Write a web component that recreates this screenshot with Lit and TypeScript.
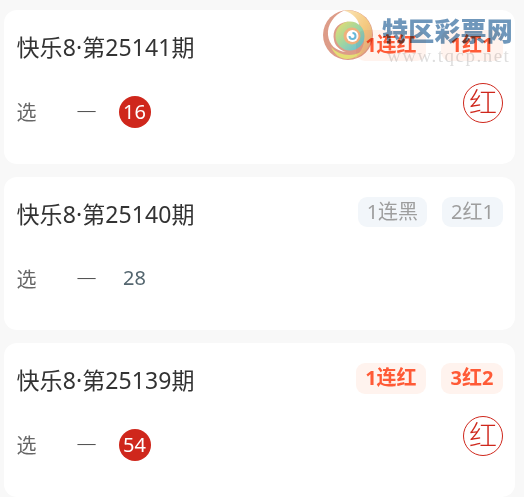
import { LitElement, html, css, svg } from "lit";
import { customElement } from "lit/decorators.js";

type Tag = { t: string; hot: boolean };
type Row = { no: string; tags: Tag[]; num: string; ball: boolean; red: boolean };

const rows: Row[] = [
  { no: "25141", tags: [{ t: "1连红", hot: true }, { t: "1红1", hot: true }], num: "16", ball: true, red: true },
  { no: "25140", tags: [{ t: "1连黑", hot: false }, { t: "2红1", hot: false }], num: "28", ball: false, red: false },
  { no: "25139", tags: [{ t: "1连红", hot: true }, { t: "3红2", hot: true }], num: "54", ball: true, red: true },
];

@customElement("app-root")
export class AppRoot extends LitElement {
  static styles = css`
    :host {
      display: block;
      width: 524px;
      height: 497px;
      overflow: hidden;
      position: relative;
      background: #f8f8f8;
      font-family: "Noto Sans", "Noto Sans CJK SC", sans-serif;
    }
    .list {
      display: flex;
      flex-direction: column;
      gap: 13px;
      padding: 10px 9px 0 4px;
    }
    .card {
      background: #fff;
      border-radius: 13px;
      height: 153.5px;
      box-sizing: border-box;
      padding: 20px 12px 0 12.5px;
      display: flex;
      flex-direction: column;
      position: relative;
    }
    .top {
      display: flex;
      justify-content: space-between;
      align-items: flex-start;
      height: 34px;
    }
    .title {
      font-size: 23px;
      line-height: 34px;
      letter-spacing: 0.1px;
      color: #333;
    }
    .tags {
      display: flex;
      gap: 15px;
    }
    .tag {
      height: 30.5px;
      line-height: 30px;
      padding: 0 9px;
      border-radius: 9px;
      font-size: 20px;
      background: #f2f6fa;
      color: #9e9e9e;
    }
    .tag.hot {
      background: #fff3ee;
      color: #ff5a36;
      font-weight: 700;
      padding: 0 9.5px;
    }
    .bottom {
      display: flex;
      justify-content: space-between;
      align-items: flex-start;
      margin-top: 19px;
    }
    .pick {
      display: flex;
      align-items: center;
      height: 32px;
      margin-top: 12.5px;
    }
    .label {
      font-size: 20px;
      color: #666;
      width: 60px;
    }
    .dash {
      font-size: 20px;
      font-weight: 300;
      color: #555;
      width: 42px;
    }
    .num {
      width: 32px;
      height: 32px;
      line-height: 32px;
      text-align: center;
      font-size: 20px;
      color: #54666f;
      border-radius: 50%;
    }
    .num.ball {
      background: #cf271c;
      color: #fff;
    }
    .mark {
      width: 40px;
      height: 40px;
      line-height: 37px;
      box-sizing: border-box;
      border: 1px solid #cf271c;
      border-radius: 50%;
      text-align: center;
      font-size: 28px;
      font-weight: 300;
      color: #cf271c;
    }
    .wm {
      position: absolute;
      left: 322px;
      top: 9px;
      width: 202px;
      height: 56px;
      pointer-events: none;
      mix-blend-mode: multiply;
    }
    .wm svg {
      position: absolute;
      left: 0;
      top: 0;
    }
    .wm-name {
      position: absolute;
      left: 60px;
      top: 5px;
      font-size: 26px;
      line-height: 34px;
      font-weight: 900;
      white-space: nowrap;
      letter-spacing: 0.2px;
      color: #6f97bb;
    }
    .wm-url {
      position: absolute;
      left: 65px;
      top: 37px;
      font-family: "Liberation Serif", serif;
      font-size: 19px;
      line-height: 20px;
      letter-spacing: 1.5px;
      white-space: nowrap;
      color: #dedede;
    }
  `;

  private logo() {
    return svg`<svg width="52" height="52" viewBox="0 0 52 52">
      <defs>
        <linearGradient id="g1" x1="0" y1="0" x2="1" y2="1">
          <stop offset="0" stop-color="#fbe6b8"/>
          <stop offset="0.55" stop-color="#f4c97f"/>
          <stop offset="1" stop-color="#d9a98a"/>
        </linearGradient>
        <linearGradient id="g2" x1="0" y1="0" x2="1" y2="1">
          <stop offset="0" stop-color="#efdc6a"/>
          <stop offset="0.45" stop-color="#a6d79b"/>
          <stop offset="1" stop-color="#5fbde2"/>
        </linearGradient>
      </defs>
      <circle cx="26" cy="26" r="25" fill="#dd9c88"/>
      <path d="M22 1.500c10-2 24 4 27.500 18 2 9-1 18-8 24.500-3 2.500-6 4-9 5 8-7 12-16 8-27C37 11 29 5 22 1.500z" fill="url(#g1)"/>
      <path d="M22 1.500C31 4 38 11 38 21c-2-5-8-9-14-8-9 1-14 9-12 18 1 6 6 10 12 12-10-1-17-7-18-17C5 16 12 6 22 1.500z" fill="#fff"/>
      <path d="M9 38c7 8 19 10 28 6 1-.5 2-1 3-2-3 4-8 8-15 8-7 0-13-5-16-12z" fill="#e5de75"/>
      <circle cx="28" cy="27" r="14.500" fill="url(#g2)"/>
      <circle cx="30" cy="27" r="8.500" fill="#f0b07c"/>
      <circle cx="30.500" cy="27" r="6" fill="#fff"/>
      <path d="M30.500 23a4 4 0 1 1-4 4h2a2 2 0 1 0 2-2z" fill="#69b8d8"/>
    </svg>`;
  }

  render() {
    return html`
      <div class="list">
        ${rows.map(
          (r) => html`
            <div class="card">
              <div class="top">
                <div class="title">快乐8·第${r.no}期</div>
                <div class="tags">
                  ${r.tags.map((g) => html`<span class="tag ${g.hot ? "hot" : ""}">${g.t}</span>`)}
                </div>
              </div>
              <div class="bottom">
                <div class="pick">
                  <span class="label">选</span>
                  <span class="dash">一</span>
                  <span class="num ${r.ball ? "ball" : ""}">${r.num}</span>
                </div>
                ${r.red ? html`<div class="mark">红</div>` : ""}
              </div>
            </div>
          `
        )}
      </div>
      <div class="wm">
        ${this.logo()}
        <div class="wm-name">特区彩票网</div>
        <div class="wm-url">www.tqcp.net</div>
      </div>
    `;
  }
}
